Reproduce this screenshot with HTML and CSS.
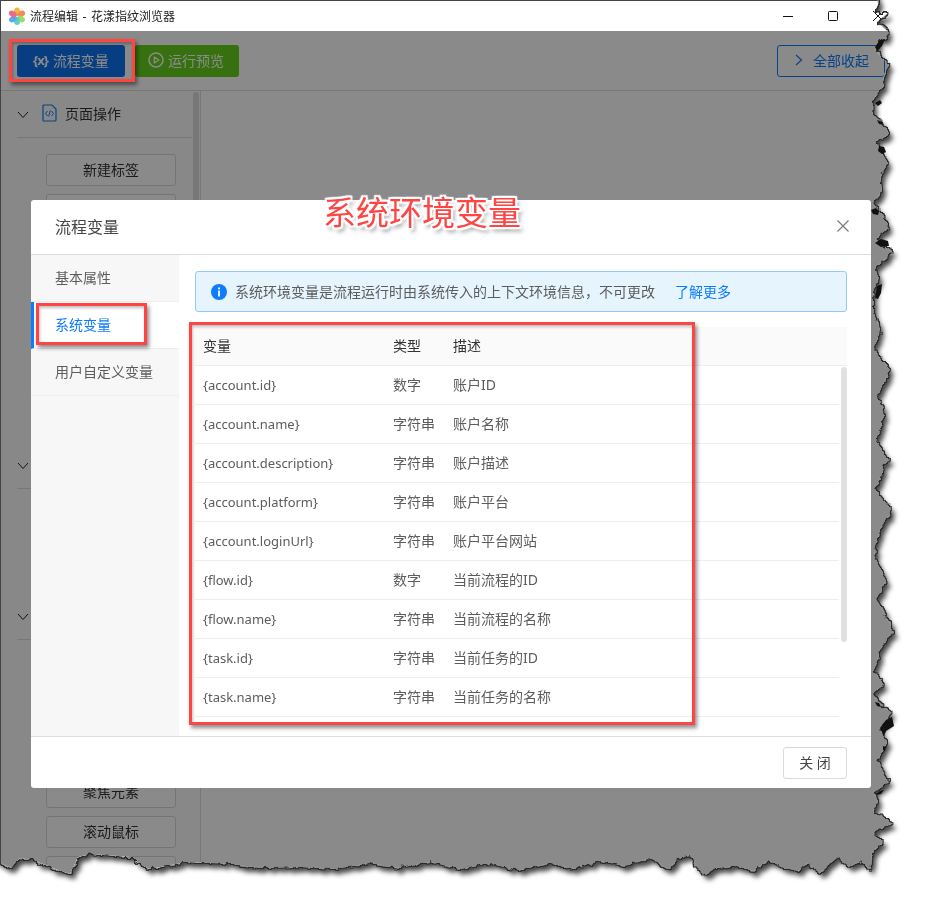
FILE: index.html
```html
<!DOCTYPE html>
<html lang="en">

<head>
    <meta charset="UTF-8">
    <meta name="viewport" content="width=device-width, initial-scale=1.0">
    <title>流程编辑</title>
    <link rel="stylesheet" href="styles.css">
</head>

<body>
    <!-- roughens only the outline of the window, the content stays sharp -->
    <svg class="defs" width="0" height="0">
        <filter id="tear" x="-2%" y="-2%" width="104%" height="104%" color-interpolation-filters="sRGB">
            <feTurbulence type="fractalNoise" baseFrequency="0.16" numOctaves="2" seed="7" result="noise" />
            <feDisplacementMap in="SourceAlpha" in2="noise" scale="7" xChannelSelector="R" yChannelSelector="G" result="edge" />
            <feFlood flood-color="#8a8a8a" />
            <feComposite in2="edge" operator="in" result="fill" />
            <feComposite in="SourceGraphic" in2="edge" operator="in" result="body" />
            <feMorphology in="edge" operator="dilate" radius="0.6" result="fat" />
            <feFlood flood-color="#2a2a2a" />
            <feComposite in2="fat" operator="in" result="line" />
            <feGaussianBlur in="edge" stdDeviation="2.4" />
            <feOffset dx="4" dy="5" result="blur" />
            <feFlood flood-color="#000" flood-opacity="0.72" />
            <feComposite in2="blur" operator="in" result="shadow" />
            <feMerge>
                <feMergeNode in="shadow" />
                <feMergeNode in="line" />
                <feMergeNode in="fill" />
                <feMergeNode in="body" />
            </feMerge>
        </filter>
    </svg>

    <div class="shot">
        <div class="torn">
            <div class="window">
                <div class="titlebar">
                    <svg class="logo" width="18" height="18" viewBox="0 0 18 18">
                        <ellipse cx="9" cy="4.6" rx="3" ry="4.2" fill="#f7b733" />
                        <ellipse cx="13.2" cy="7" rx="3" ry="4.2" fill="#f28a5a" transform="rotate(60 13.2 7)" />
                        <ellipse cx="13" cy="12" rx="3" ry="4.2" fill="#9bdc6a" transform="rotate(120 13 12)" />
                        <ellipse cx="9" cy="14" rx="3" ry="4" fill="#5fd0c0" />
                        <ellipse cx="5" cy="12" rx="3" ry="4.2" fill="#5aa9f0" transform="rotate(60 5 12)" />
                        <ellipse cx="4.8" cy="7" rx="3" ry="4.2" fill="#ee6a8a" transform="rotate(120 4.8 7)" />
                    </svg>
                    <span class="app-title">流程编辑 - 花漾指纹浏览器</span>
                    <div class="win-controls">
                        <svg width="10" height="10" viewBox="0 0 10 10"><path d="M0 5.5h10" stroke="#111" fill="none" /></svg>
                        <svg width="10" height="10" viewBox="0 0 10 10"><rect x="0.5" y="0.5" width="9" height="9" rx="1" stroke="#111" fill="none" /></svg>
                        <svg width="10" height="10" viewBox="0 0 10 10"><path d="M0 0l10 10M10 0L0 10" stroke="#111" fill="none" /></svg>
                    </div>
                </div>

                <div class="toolbar">
                    <button class="btn btn-blue"><b class="var-icon">{x}</b>流程变量</button>
                    <button class="btn btn-green">
                        <svg width="16" height="16" viewBox="0 0 16 16">
                            <circle cx="8" cy="8" r="7" stroke="#fff" stroke-width="1.5" fill="none" />
                            <path d="M6.3 5v6l4.6-3z" stroke="#fff" stroke-width="1.3" fill="none" stroke-linejoin="round" />
                        </svg>
                        运行预览
                    </button>
                    <button class="btn btn-outline">
                        <svg width="10" height="12" viewBox="0 0 10 12"><path d="M2 1l5.5 5L2 11" stroke="#0f7cff" stroke-width="1.2" fill="none" /></svg>
                        全部收起
                    </button>
                </div>

                <div class="workspace">
                    <div class="sidebar">
                        <div class="side-thumb"></div>

                        <div class="group-head">
                            <svg class="chev" width="12" height="8" viewBox="0 0 12 8"><path d="M1 1l5 5.5L11 1" stroke="#222" fill="none" /></svg>
                            <svg class="page-icon" width="15" height="18" viewBox="0 0 15 18">
                                <path d="M1 2a1 1 0 0 1 1-1h8l4 4v11a1 1 0 0 1-1 1H2a1 1 0 0 1-1-1z" stroke="#0f7cff" stroke-width="1.2" fill="none" />
                                <path d="M5.5 7L3.5 9.5 5.5 12M9.5 7l2 2.5-2 2.5M8.3 6.5l-1.6 6" stroke="#0f7cff" fill="none" />
                            </svg>
                            <span>页面操作</span>
                        </div>
                        <div class="group-body">
                            <button class="side-btn">新建标签</button>
                            <button class="side-btn"></button>
                            <button class="side-btn"></button>
                            <button class="side-btn"></button>
                            <button class="side-btn"></button>
                            <button class="side-btn"></button>
                            <button class="side-btn"></button>
                        </div>

                        <div class="group-head">
                            <svg class="chev" width="12" height="8" viewBox="0 0 12 8"><path d="M1 1l5 5.5L11 1" stroke="#222" fill="none" /></svg>
                        </div>
                        <div class="group-body">
                            <button class="side-btn"></button>
                            <button class="side-btn"></button>
                        </div>

                        <div class="group-head">
                            <svg class="chev" width="12" height="8" viewBox="0 0 12 8"><path d="M1 1l5 5.5L11 1" stroke="#222" fill="none" /></svg>
                        </div>
                        <div class="group-body">
                            <button class="side-btn"></button>
                            <button class="side-btn"></button>
                            <button class="side-btn"></button>
                            <button class="side-btn">聚焦元素</button>
                            <button class="side-btn">滚动鼠标</button>
                            <button class="side-btn"></button>
                        </div>
                    </div>
                </div>

                <div class="mask">
                    <div class="modal">
                        <div class="modal-head">
                            <span>流程变量</span>
                            <svg width="12" height="12" viewBox="0 0 12 12"><path d="M0.5 0.5l11 11M11.5 0.5l-11 11" stroke="#777" stroke-width="1.1" fill="none" /></svg>
                        </div>
                        <div class="modal-body">
                            <div class="tabs">
                                <div class="tab">基本属性</div>
                                <div class="tab active">系统变量</div>
                                <div class="tab">用户自定义变量</div>
                            </div>
                            <div class="pane">
                                <div class="alert">
                                    <svg width="16" height="16" viewBox="0 0 16 16">
                                        <circle cx="8" cy="8" r="8" fill="#0f7cff" />
                                        <rect x="7.1" y="3.5" width="1.8" height="1.8" fill="#fff" />
                                        <rect x="7.1" y="6.5" width="1.8" height="6" fill="#fff" />
                                    </svg>
                                    <span>系统环境变量是流程运行时由系统传入的上下文环境信息，不可更改</span>
                                    <a class="more">了解更多</a>
                                </div>
                                <div class="table">
                                    <div class="row row-head"><span>变量</span><span>类型</span><span>描述</span></div>
                                    <div class="rows">
                                        <div class="row"><span>{account.id}</span><span>数字</span><span>账户ID</span></div>
                                        <div class="row"><span>{account.name}</span><span>字符串</span><span>账户名称</span></div>
                                        <div class="row"><span>{account.description}</span><span>字符串</span><span>账户描述</span></div>
                                        <div class="row"><span>{account.platform}</span><span>字符串</span><span>账户平台</span></div>
                                        <div class="row"><span>{account.loginUrl}</span><span>字符串</span><span>账户平台网站</span></div>
                                        <div class="row"><span>{flow.id}</span><span>数字</span><span>当前流程的ID</span></div>
                                        <div class="row"><span>{flow.name}</span><span>字符串</span><span>当前流程的名称</span></div>
                                        <div class="row"><span>{task.id}</span><span>字符串</span><span>当前任务的ID</span></div>
                                        <div class="row"><span>{task.name}</span><span>字符串</span><span>当前任务的名称</span></div>
                                        <div class="table-thumb"></div>
                                    </div>
                                </div>
                            </div>
                        </div>
                        <div class="modal-foot">
                            <button class="close-btn">关 闭</button>
                        </div>
                    </div>
                </div>
            </div>
        </div>

        <!-- black clots the torn-edge effect leaves on the right side -->
        <svg class="clots" width="932" height="899" viewBox="0 0 932 899">
            <path d="M875 47l5-7 5-1-3 7-5 5zM875 103l5-3 2 3-4 3zM877 120l5 2 2 3-5-1zM879 146l5 1 2 5-4 2-4-3zM871 210l5-2 3 3-1 4-5-1zM875 243l6-4 7 2 1 5-8 1zM875 298l2-12 5-2-1 9-3 6zM880 728l6-8 6-3 2 9-8 5-2 5zM875 702l4 1 2 4-4-1zM875 795l5-4 4-1-3 4zM883 746l3 1-1 4-2-1z" fill="#111" />
        </svg>

        <!-- red notes drawn on top of the screenshot -->
        <div class="note note-btn"></div>
        <div class="note note-tab"></div>
        <div class="note note-table"></div>
        <div class="note-text">系统环境变量</div>
    </div>
</body>

</html>
```

FILE: styles.css
```css
* {
    box-sizing: border-box;
}

html, body {
    margin: 0;
    padding: 0;
    background-color: #fff;
}

body {
    font-family: "Noto Sans", "Noto Sans CJK SC", sans-serif;
    font-size: 14px;
    color: #5c5c5c;
}

button {
    font-family: inherit;
    font-size: 14px;
}

.defs {
    position: absolute;
}

.shot {
    position: relative;
    width: 932px;
    height: 899px;
    overflow: hidden;
}

.torn {
    width: 932px;
    height: 899px;
    filter: url(#tear);
}

.clots {
    position: absolute;
    top: 0;
    left: 0;
}

/* the box-shadow only fills the negative part of the clip, so the rough filter stays off the top and left sides */
.window {
    position: relative;
    width: 900px;
    height: 880px;
    background-color: #fff;
    border-top: 1px solid #444;
    border-left: 1px solid #444;
    box-shadow: -10px -10px 0 0 #444;
    clip-path: polygon(-10px -10px, 877px -10px, 878px 5px, 874px 13px, 888px 13px, 877px 22px, 884px 28px, 890px 33px, 880px 42px, 875px 50px, 887px 63px, 890px 63px, 884px 74px, 883px 87px, 873px 100px, 872px 113px, 881px 122px, 890px 133px, 876px 143px, 881px 152px, 888px 163px, 880px 177px, 882px 190px, 873px 203px, 881px 214px, 890px 227px, 875px 240px, 893px 253px, 875px 267px, 878px 277px, 873px 297px, 873px 310px, 880px 330px, 874px 350px, 890px 370px, 878px 395px, 885px 415px, 877px 440px, 888px 460px, 875px 490px, 892px 510px, 880px 530px, 874px 555px, 886px 580px, 877px 600px, 893px 630px, 880px 650px, 874px 672px, 885px 684px, 873px 693px, 877px 702px, 892px 713px, 880px 730px, 887px 743px, 878px 760px, 888px 782px, 874px 793px, 878px 803px, 873px 812px, 893px 823px, 873px 833px, 882px 843px, 872px 852px, 870px 870px, 860px 860px, 850px 868px, 838px 858px, 820px 873px, 807px 863px, 797px 872px, 783px 868px, 768px 860px, 753px 871px, 737px 866px, 717px 868px, 703px 876px, 690px 855px, 680px 858px, 668px 869px, 650px 858px, 625px 866px, 600px 861px, 575px 869px, 550px 863px, 520px 870px, 490px 864px, 460px 869px, 430px 862px, 400px 868px, 370px 863px, 335px 869px, 300px 867px, 260px 868px, 233px 864px, 187px 862px, 150px 869px, 140px 865px, 132px 857px, 90px 854px, 78px 857px, 70px 874px, 58px 870px, 33px 860px, 20px 858px, 12px 868px, -10px 859px);
}

.titlebar {
    display: flex;
    align-items: center;
    height: 30px;
    padding-left: 7px;
    color: #222;
    font-size: 12px;
}

.logo {
    margin-right: 4px;
}

.app-title {
    word-spacing: 1.5px;
    padding-bottom: 1px;
}

.win-controls {
    display: flex;
    gap: 35px;
    margin-left: auto;
    margin-right: 17px;
}

.toolbar {
    display: flex;
    align-items: center;
    gap: 10px;
    height: 60px;
    padding: 0 15px 0 16px;
    border-bottom: 1px solid #ddd;
}

.btn {
    display: flex;
    align-items: center;
    justify-content: center;
    gap: 4px;
    height: 32px;
    padding: 0 0 2px;
    border-radius: 3px;
    border: 1px solid transparent;
    color: #fff;
}

.btn-blue {
    width: 108px;
    gap: 5px;
    background-color: #0e74f0;
}

.var-icon {
    font-size: 13px;
    font-weight: bold;
    letter-spacing: -1px;
}

.btn-green {
    width: 104px;
    padding-right: 2px;
    background-color: #64d01c;
}

.btn-outline {
    width: 108px;
    margin-left: auto;
    justify-content: flex-start;
    padding-left: 16px;
    gap: 9px;
    color: #0f7cff;
    background-color: #fff;
    border-color: #0f7cff;
}

.workspace {
    height: 790px;
}

.sidebar {
    position: relative;
    width: 200px;
    height: 790px;
    padding: 0 8px 0 16px;
    border-right: 1px solid #ddd;
    background-color: #fcfcfc;
}

.side-thumb {
    position: absolute;
    top: 1px;
    right: 1px;
    width: 6px;
    height: 330px;
    border-radius: 3px;
    background-color: #ddd;
}

.group-head {
    display: flex;
    align-items: center;
    height: 47px;
    padding-bottom: 2px;
    border-bottom: 1px solid #ddd;
    color: #333;
}

.chev {
    margin: 3px 10px 0 0;
}

.page-icon {
    margin: 0 8px 0 3px;
}

.group-body {
    display: flex;
    flex-direction: column;
    gap: 8px;
    padding: 16px 0 16px 29px;
}

.side-btn {
    width: 130px;
    height: 32px;
    flex: none;
    padding: 0 0 2px;
    background-color: #fff;
    border: 1px solid #d9d9d9;
    border-radius: 3px;
    color: #333;
}

.mask {
    position: absolute;
    top: 30px;
    left: 0;
    right: 0;
    bottom: 0;
    padding: 169px 0 0 30px;
    background-color: rgba(0, 0, 0, 0.46);
}

.modal {
    display: flex;
    flex-direction: column;
    width: 840px;
    height: 588px;
    border-radius: 3px;
    background-color: #fff;
    overflow: hidden;
}

.modal-head {
    display: flex;
    align-items: center;
    justify-content: space-between;
    height: 55px;
    padding: 0 22px 2px 24px;
    border-bottom: 1px solid #ddd;
    font-size: 16px;
    color: #444;
}

.modal-body {
    display: flex;
    height: 481px;
}

.tabs {
    width: 148px;
    background-color: #f7f7f7;
}

.tab {
    display: flex;
    align-items: center;
    height: 47px;
    padding: 0 0 2px 24px;
    border-bottom: 1px solid #eee;
}

.tab.active {
    padding-left: 21px;
    border-left: 3px solid #0f7cff;
    background-color: #fff;
    color: #0f7cff;
}

.pane {
    flex: 1;
    padding: 16px 24px 0 16px;
}

.alert {
    display: flex;
    align-items: center;
    height: 41px;
    padding: 0 0 0 15px;
    background-color: #e6f4fd;
    border: 1px solid #91caff;
    border-radius: 3px;
}

.alert span, .more {
    padding-bottom: 2px;
}

.alert svg {
    margin-right: 8px;
}

.more {
    margin-left: 20px;
    color: #0f7cff;
}

.table {
    margin-top: 15px;
}

.row {
    display: grid;
    grid-template-columns: 190px 60px 1fr;
    align-items: center;
    height: 39px;
    padding-left: 8px;
    margin-right: 8px;
    font-size: 13px;
    border-bottom: 1px solid #eee;
}

.row span + span {
    padding-bottom: 2px;
    font-size: 14px;
}

.row-head {
    margin-right: 0;
    background-color: #fafafa;
    font-size: 14px;
    color: #333;
}

.row-head span {
    padding-bottom: 2px;
}

.rows {
    position: relative;
}

.table-thumb {
    position: absolute;
    top: 1px;
    right: 0;
    width: 6px;
    height: 275px;
    border-radius: 3px;
    background-color: #e1e1e1;
}

.modal-foot {
    display: flex;
    align-items: center;
    justify-content: flex-end;
    flex: 1;
    padding-right: 24px;
    border-top: 1px solid #ddd;
}

.close-btn {
    width: 64px;
    height: 32px;
    padding: 0 0 2px;
    background-color: #fff;
    border: 1px solid #d9d9d9;
    border-radius: 3px;
    color: #444;
}

.note {
    position: absolute;
    border: 3px solid #ff4444;
    box-shadow: 2px 3px 4px rgba(0, 0, 0, 0.45), inset 1px 2px 3px rgba(0, 0, 0, 0.25);
}

.note-btn {
    left: 9px;
    top: 39px;
    width: 126px;
    height: 43px;
}

.note-tab {
    left: 36px;
    top: 303px;
    width: 111px;
    height: 42px;
}

.note-table {
    left: 189px;
    top: 322px;
    width: 506px;
    height: 403px;
}

.note-text {
    position: absolute;
    left: 323px;
    top: 190px;
    font-size: 33px;
    line-height: 46px;
    color: #ff4444;
    text-shadow: 0 0 2px #fff, 2px 0 1px #fff, -2px 0 1px #fff, 0 2px 1px #fff, 0 -2px 1px #fff, 2px 2px 1px #fff, -2px 2px 1px #fff, 2px -2px 1px #fff, -2px -2px 1px #fff, 3px 4px 4px rgba(0, 0, 0, 0.5);
}
```
